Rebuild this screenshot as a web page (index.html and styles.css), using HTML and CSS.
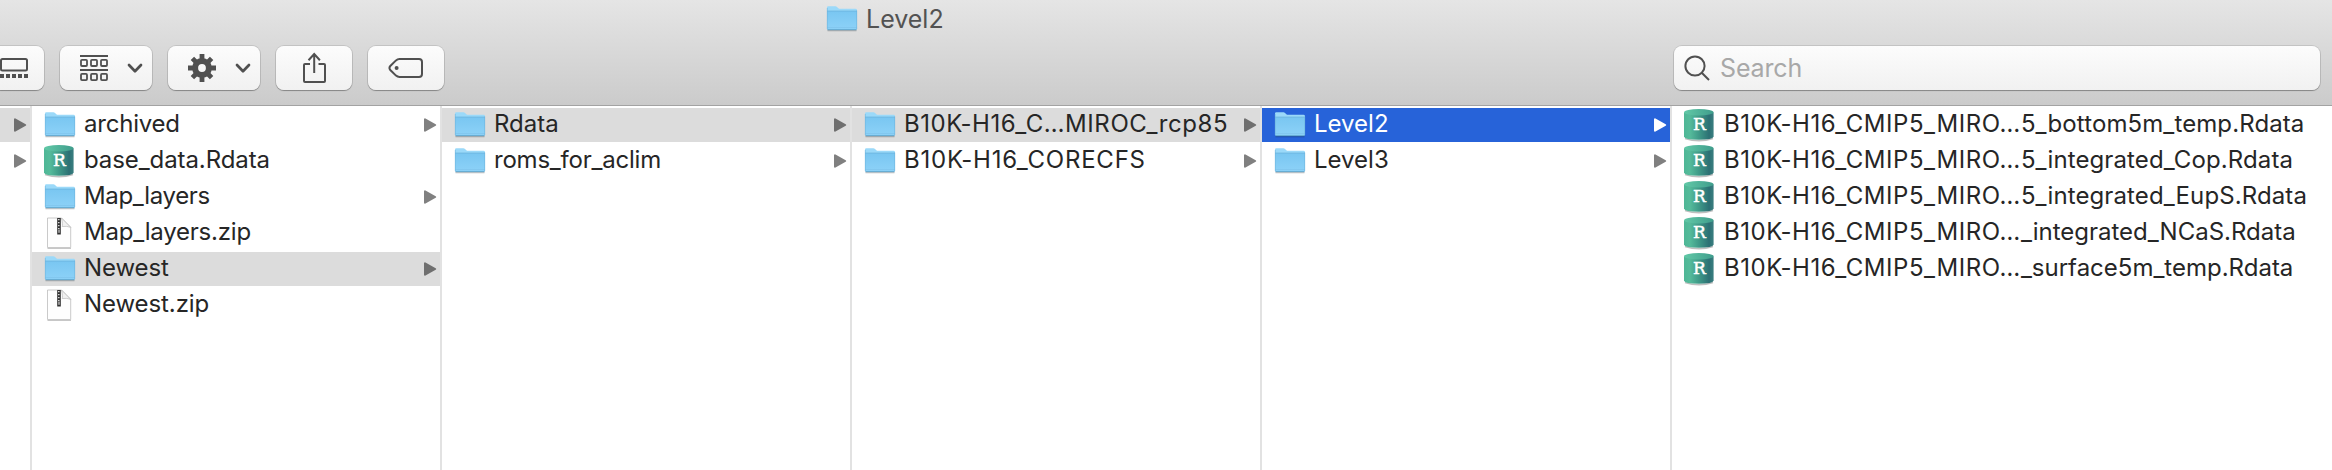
FILE: index.html
```html
<!DOCTYPE html>
<html lang="en">
<head>
<meta charset="utf-8">
<title>Level2</title>
<link rel="stylesheet" href="styles.css">
</head>
<body>
<svg class="defs" width="0" height="0" aria-hidden="true">
  <defs>
    <linearGradient id="folderFill" x1="0" y1="0" x2="0" y2="1"><stop offset="0" stop-color="#79c6f1"/><stop offset="1" stop-color="#8dd2f8"/></linearGradient>
    <linearGradient id="drumFill" x1="0" y1="0" x2="1" y2="0"><stop offset="0" stop-color="#4fb796"/><stop offset=".2" stop-color="#55bb9b"/><stop offset=".5" stop-color="#3f9a88"/><stop offset=".85" stop-color="#2c7074"/><stop offset="1" stop-color="#3b7f80"/></linearGradient>
    <linearGradient id="drumTop" x1="0" y1="0" x2="1" y2="0"><stop offset="0" stop-color="#62c9a7"/><stop offset="1" stop-color="#3f9d8c"/></linearGradient>
    <symbol id="folder" viewBox="0 0 32 28">
      <path d="M1.5 25.6h29" stroke="#000" stroke-opacity=".22" stroke-width="1.4"/>
      <path d="M1 2.6Q1 1.2 2.4 1.2H9.4Q10.4 1.2 11 1.9L12.4 3.2Q12.9 3.8 13.8 3.8H29.4Q31 3.8 31 5.2V9H1Z" fill="#9bd9f9"/>
      <path d="M1 6H31V23.6Q31 25 29.6 25H2.4Q1 25 1 23.6Z" fill="url(#folderFill)"/>
      <path d="M1 6.1H31" stroke="#6db6e0" stroke-width=".9"/>
      <path d="M1.3 22.6H30.7" stroke="#7bbfe8" stroke-width=".6"/>
      <path d="M1.4 24.7H30.6" stroke="#5b9fc6" stroke-width=".9"/>
      <path d="M1.3 3V24M30.7 5.5V24" stroke="#6db4dc" stroke-width=".6"/>
    </symbol>
    <symbol id="drum" viewBox="0 0 32 34">
      <path d="M2 30.5Q16 35 30 30.5" fill="none" stroke="#000" stroke-opacity=".25" stroke-width="1.6"/>
      <path d="M1 4.5V28.5Q1.500 31.800 15.800 31.800T30.600 28.500V4.500Z" fill="url(#drumFill)"/>
      <ellipse cx="15.800" cy="4.200" rx="14.800" ry="3.200" fill="url(#drumTop)"/>
      <text x="16.400" y="22" text-anchor="middle" class="drum-letter">R</text>
    </symbol>
    <symbol id="zip" viewBox="0 0 32 34">
      <path d="M4.500 32.300H28" stroke="#000" stroke-opacity=".28" stroke-width="1"/>
      <path d="M4.500 2H18.500L27.700 11.200V31.500H4.500Z" fill="#fefefe" stroke="#bdbdbd" stroke-width=".8"/>
      <path d="M18.500 2Q20 9 19.200 10.500Q24 9.800 27.700 11.400Z" fill="#f1f1f1" stroke="#b9b9b9" stroke-width=".7"/>
      <path d="M16 2V18.500" stroke="#303030" stroke-width="3.600"/>
      <path d="M15.800 3V13" stroke="#e8e8e8" stroke-width="1.400" stroke-dasharray="1.200 1.800"/>
      <path d="M16 13.500V16.800" stroke="#f5f5f5" stroke-width="1"/>
    </symbol>
    <symbol id="arrow" viewBox="0 0 14 16">
      <path d="M2 2.300V13.700L12.200 8Z" fill="currentColor" stroke="currentColor" stroke-width="2" stroke-linejoin="round"/>
    </symbol>
    <symbol id="chevron" viewBox="0 0 18 12">
      <path d="M3 3L9 9.200L15 3" fill="none" stroke="currentColor" stroke-width="2.700" stroke-linecap="round" stroke-linejoin="round"/>
    </symbol>
  </defs>
</svg>

<div class="window">
  <header class="header">
    <div class="title"><svg class="icon-folder"><use href="#folder"/></svg><span>Level2</span></div>
    <div class="toolbar">
      <div class="tools">
        <button class="btn btn-gallery" aria-label="Gallery view">
          <svg width="28" height="22" viewBox="0 0 28 22"><rect x="1" y="2" width="26" height="11.600" rx="1.500" fill="none" stroke="#505050" stroke-width="2"/><path d="M0 19H28" stroke="#505050" stroke-width="4" stroke-dasharray="4 2"/></svg>
        </button>
        <button class="btn btn-menu" aria-label="Group">
          <svg width="28" height="28" viewBox="0 0 28 28" fill="none" stroke="#505050" stroke-width="1.800"><path d="M0 2H28M0 16H28"/><rect x="1" y="5.800" width="6" height="6.200" rx="1"/><rect x="11" y="5.800" width="6" height="6.200" rx="1"/><rect x="21" y="5.800" width="6" height="6.200" rx="1"/><rect x="1" y="19.900" width="6" height="6.200" rx="1"/><rect x="11" y="19.900" width="6" height="6.200" rx="1"/><rect x="21" y="19.900" width="6" height="6.200" rx="1"/></svg>
          <svg class="chev"><use href="#chevron"/></svg>
        </button>
        <button class="btn btn-menu" aria-label="Action">
          <svg width="28" height="28" viewBox="-14 -14 28 28"><g stroke="#505050" stroke-width="4.800"><path d="M0-14V-7M0 7V14M-14 0H-7M7 0H14M-9.600-9.600L-5-5M5 5L9.600 9.600M-9.600 9.600L-5 5M5-5L9.600-9.600"/></g><circle r="6.900" fill="none" stroke="#505050" stroke-width="6"/></svg>
          <svg class="chev"><use href="#chevron"/></svg>
        </button>
        <button class="btn btn-wide" aria-label="Share">
          <svg width="24" height="32" viewBox="0 0 24 32" fill="none" stroke="#505050" stroke-width="2"><path d="M8 12H3Q2 12 2 13V29Q2 30 3 30H22Q23 30 23 29V13Q23 12 22 12H16.500M12.200 21V2.500M6.500 8.200L12.200 2L17.900 8.200"/></svg>
        </button>
        <button class="btn btn-wide" aria-label="Tags">
          <svg width="36" height="22" viewBox="0 0 36 22"><path d="M11.500 2H31Q34 2 34 5V17Q34 20 31 20H11.500Q9.500 20 8 18.600L2.300 13Q.6 11 2.300 9L8 3.400Q9.500 2 11.500 2Z" fill="none" stroke="#505050" stroke-width="2"/><circle cx="8.600" cy="11" r="2" fill="#505050"/></svg>
        </button>
      </div>
      <div class="search">
        <svg width="26" height="26" viewBox="0 0 26 26" fill="none" stroke="#505050" stroke-width="2"><circle cx="11" cy="11" r="9.600"/><path d="M17.700 17.700L25 25"/></svg>
        <span>Search</span>
      </div>
    </div>
  </header>

  <main class="columns">
    <section class="col col-first">
      <div class="row sel"><svg class="arrow"><use href="#arrow"/></svg></div>
      <div class="row"><svg class="arrow"><use href="#arrow"/></svg></div>
    </section>
    <section class="col">
      <div class="row"><svg class="icon-folder"><use href="#folder"/></svg><span class="name tight">archived</span><svg class="arrow"><use href="#arrow"/></svg></div>
      <div class="row"><svg class="icon-file"><use href="#drum"/></svg><span class="name snug">base_data.Rdata</span></div>
      <div class="row"><svg class="icon-folder"><use href="#folder"/></svg><span class="name tighter">Map_layers</span><svg class="arrow"><use href="#arrow"/></svg></div>
      <div class="row"><svg class="icon-file"><use href="#zip"/></svg><span class="name tight">Map_layers.zip</span></div>
      <div class="row sel"><svg class="icon-folder"><use href="#folder"/></svg><span class="name snug">Newest</span><svg class="arrow"><use href="#arrow"/></svg></div>
      <div class="row"><svg class="icon-file"><use href="#zip"/></svg><span class="name snug">Newest.zip</span></div>
    </section>
    <section class="col">
      <div class="row sel"><svg class="icon-folder"><use href="#folder"/></svg><span class="name">Rdata</span><svg class="arrow"><use href="#arrow"/></svg></div>
      <div class="row"><svg class="icon-folder"><use href="#folder"/></svg><span class="name tight">roms_for_aclim</span><svg class="arrow"><use href="#arrow"/></svg></div>
    </section>
    <section class="col">
      <div class="row sel"><svg class="icon-folder"><use href="#folder"/></svg><span class="name wide">B10K-H16_C…MIROC_rcp85</span><svg class="arrow"><use href="#arrow"/></svg></div>
      <div class="row"><svg class="icon-folder"><use href="#folder"/></svg><span class="name wider">B10K-H16_CORECFS</span><svg class="arrow"><use href="#arrow"/></svg></div>
    </section>
    <section class="col">
      <div class="row active"><svg class="icon-folder"><use href="#folder"/></svg><span class="name">Level2</span><svg class="arrow"><use href="#arrow"/></svg></div>
      <div class="row"><svg class="icon-folder"><use href="#folder"/></svg><span class="name">Level3</span><svg class="arrow"><use href="#arrow"/></svg></div>
    </section>
    <section class="col col-last">
      <div class="row"><svg class="icon-file"><use href="#drum"/></svg><span class="name airy"><span class="wide">B10K-H16_CMIP5_MIRO…</span>5_bottom5m_temp.Rdata</span></div>
      <div class="row"><svg class="icon-file"><use href="#drum"/></svg><span class="name airy"><span class="wide">B10K-H16_CMIP5_MIRO…</span>5_integrated_Cop.Rdata</span></div>
      <div class="row"><svg class="icon-file"><use href="#drum"/></svg><span class="name airy"><span class="wide">B10K-H16_CMIP5_MIRO…</span>5_integrated_EupS.Rdata</span></div>
      <div class="row"><svg class="icon-file"><use href="#drum"/></svg><span class="name"><span class="wide">B10K-H16_CMIP5_MIRO…</span>_integrated_NCaS.Rdata</span></div>
      <div class="row"><svg class="icon-file"><use href="#drum"/></svg><span class="name"><span class="wide">B10K-H16_CMIP5_MIRO…</span>_surface5m_temp.Rdata</span></div>
    </section>
  </main>
</div>
</body>
</html>
```

FILE: styles.css
```css
* { box-sizing: border-box; }
body { margin: 0; background: #fff; font-family: Inter, "Liberation Sans", sans-serif; color: #262626; }
.defs { position: absolute; }
svg { display: block; flex: none; }
.window { height: 470px; display: flex; flex-direction: column; overflow: hidden; }

.header { height: 106px; flex: none; background: linear-gradient(#e5e5e5, #cbcbcb); border-bottom: 1px solid #a3a3a3; }
.title { height: 38px; margin-bottom: 8px; padding-left: 826px; display: flex; align-items: center; gap: 8px; font-size: 25px; line-height: 38px; color: #525252; }
.toolbar { display: flex; justify-content: space-between; padding-right: 12px; }
.tools { display: flex; gap: 16px; }
.btn { height: 44px; border: 0; padding: 0; border-radius: 8px; background: linear-gradient(#fcfcfc, #f1f1f1); box-shadow: 0 0 0 1px rgba(0,0,0,.1), 0 1px 1px rgba(0,0,0,.28); display: flex; align-items: center; justify-content: center; color: #505050; }
.btn-gallery { width: 44px; border-radius: 0 8px 8px 0; justify-content: flex-start; }
.btn-menu { width: 92px; justify-content: space-between; padding: 0 8px 0 20px; }
.btn-wide { width: 76px; }
.chev { width: 18px; height: 12px; }
.search { width: 646px; height: 44px; border-radius: 8px; background: linear-gradient(#fcfcfc, #f1f1f1); box-shadow: 0 0 0 1px rgba(0,0,0,.1), 0 1px 1px rgba(0,0,0,.28); display: flex; align-items: center; gap: 10px; padding-left: 10px; font-size: 25px; letter-spacing: -.15px; color: #a8a8a8; }

.columns { flex: 1; display: flex; }
.col { width: 410px; flex: none; border-right: 2px solid #e2e2e2; padding-top: 2px; display: flex; flex-direction: column; gap: 2px; }
.col-first { width: 32px; }
.col-last { width: 660px; border-right: 0; }
.row { height: 34px; display: flex; align-items: center; padding: 0 3px 0 12px; color: #808080; }
.col-first .row { padding-left: 0; padding-right: 3px; }
.sel { background: #dcdcdc; color: #6f6f6f; }
.active { background: #2763d9; color: #fff; }
.name { font-size: 24px; line-height: 32px; padding-bottom: 2px; margin-left: 8px; color: #262626; white-space: nowrap; }
.active .name { color: #fff; }
.tighter { letter-spacing: -.34px; }
.tight { letter-spacing: -.22px; }
.snug { letter-spacing: -.09px; }
.airy { letter-spacing: .11px; }
.wide { letter-spacing: .57px; }
.wider { letter-spacing: .77px; }
.arrow { width: 14px; height: 16px; margin-left: auto; }
.icon-folder { width: 32px; height: 28px; }
.icon-file { width: 32px; height: 34px; }
.row .icon-file { margin-left: -1px; margin-right: 1px; }
.drum-letter { font: 17px "DejaVu Serif", serif; fill: #fff; stroke: #fff; stroke-width: .5px; }
```
